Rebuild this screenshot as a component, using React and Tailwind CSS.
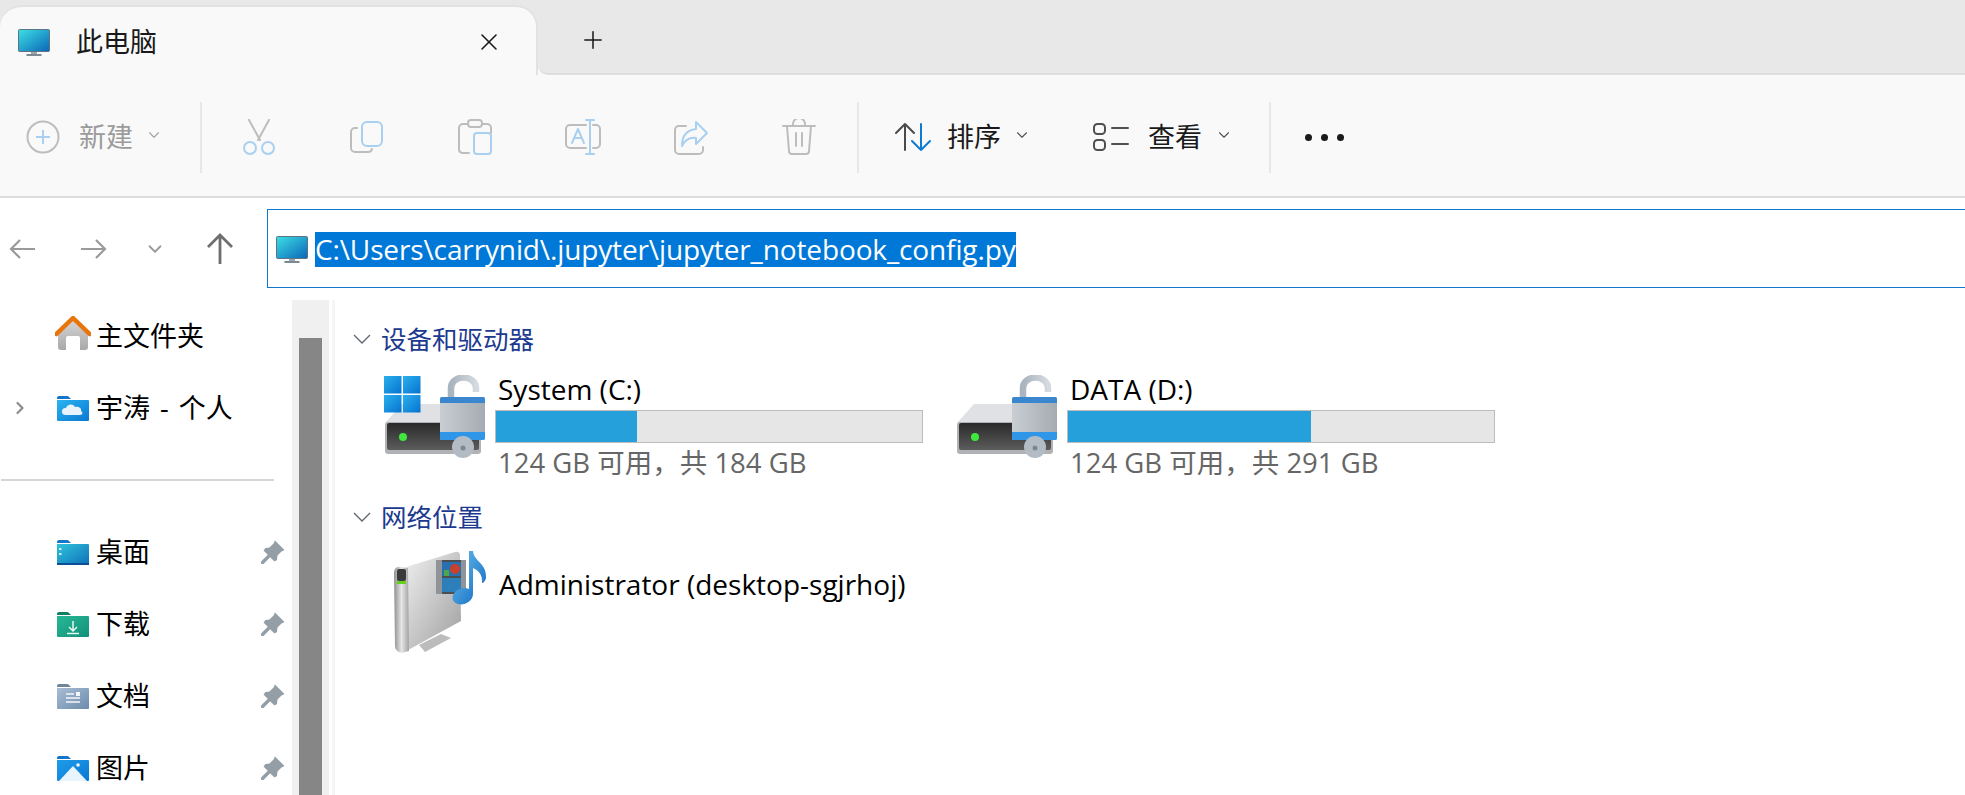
import { ChevronDown, ChevronRight, Plus, X } from "lucide-react";

const UI_FONT = "font-['Open_Sans','Noto_Sans_CJK_SC',sans-serif]";

function Monitor({ className }) {
  return (
    <svg viewBox="0 0 32 27" className={className}>
      <defs>
        <linearGradient id="screen" x1="0" y1="0" x2="1" y2="1">
          <stop offset="0" stopColor="#3ce0e4" />
          <stop offset="1" stopColor="#0b65b8" />
        </linearGradient>
      </defs>
      <rect x="0.5" y="0.5" width="31" height="22" rx="1" fill="url(#screen)" stroke="#5f7482" />
      <rect x="13" y="23" width="6" height="3" fill="#9aa5ad" />
      <rect x="8.5" y="25" width="15" height="2" fill="#7d8990" />
    </svg>
  );
}

function Folder({ children, from = "#2ab4ef", to = "#0a78d4", tab = "#1373c9" }) {
  const id = `folder-${from.slice(1)}`;
  return (
    <svg viewBox="0 0 32 25" className="w-8 h-[25px] shrink-0">
      <defs>
        <linearGradient id={id} x1="0" y1="0" x2="1" y2="1">
          <stop offset="0" stopColor={from} />
          <stop offset="1" stopColor={to} />
        </linearGradient>
      </defs>
      <path d="M0 2a2 2 0 0 1 2-2h8a3 3 0 0 1 2 1l2 2h-14z" fill={tab} />
      <path d="M0 4h31a1 1 0 0 1 1 1v19a1 1 0 0 1-1 1h-30a1 1 0 0 1-1-1z" fill={`url(#${id})`} />
      {children}
    </svg>
  );
}

function Home() {
  return (
    <svg viewBox="0 0 36 34" className="w-9 h-[34px] shrink-0 ml-[-2px] mr-[-2px] mt-[-6px]">
      <defs>
        <linearGradient id="home" x1="0" y1="0" x2="0" y2="1">
          <stop offset="0" stopColor="#d6d6d6" />
          <stop offset="1" stopColor="#a8a8a8" />
        </linearGradient>
      </defs>
      <path d="M3 16L18 4l15 12v15a3 3 0 0 1-3 3h-5V22a2 2 0 0 0-2-2h-10a2 2 0 0 0-2 2v12H6a3 3 0 0 1-3-3z" fill="url(#home)" />
      <path d="M1.5 18L18 2l16.5 16" fill="none" stroke="#e8740c" strokeWidth="4.5" strokeLinejoin="round" strokeLinecap="round" />
    </svg>
  );
}

function Pin() {
  return (
    <svg viewBox="0 0 24 24" className="w-6 h-6 shrink-0 ml-auto mr-[7px]">
      <path d="M14 0.5L23.5 10L20.5 11.5L16.5 15.5L16 20L13.5 21.5L2.5 10.5L4.5 8L8.5 7.5L12.5 3.5z" fill="#939ea6" />
      <path d="M8 16L1.5 22.5" stroke="#939ea6" strokeWidth="3.4" strokeLinecap="round" />
    </svg>
  );
}

function NavRow({ icon, label, pinned, expandable }) {
  return (
    <div className="flex items-center h-[72px]">
      <div className="w-[57px] flex justify-start pl-[10px]">
        {expandable && <ChevronRight className="w-5 h-5 text-[#8c8c8c]" strokeWidth={2.6} />}
      </div>
      <div className="w-8 flex justify-center">{icon}</div>
      <span className="ml-[7px] text-[27px] leading-9 text-black [word-spacing:3px]">{label}</span>
      {pinned && <Pin />}
    </div>
  );
}

function DriveIcon({ windows }) {
  return (
    <svg viewBox="0 0 104 84" className="w-[104px] h-[84px] shrink-0">
      <defs>
        <linearGradient id="win" x1="0" y1="0" x2="1" y2="1">
          <stop offset="0" stopColor="#2bb0ee" />
          <stop offset="1" stopColor="#0673d0" />
        </linearGradient>
        <linearGradient id="drivefront" x1="0" y1="0" x2="0" y2="1">
          <stop offset="0" stopColor="#2a2a2a" />
          <stop offset="1" stopColor="#5c5c5c" />
        </linearGradient>
        <linearGradient id="lockbody" x1="0" y1="0" x2="1" y2="0">
          <stop offset="0" stopColor="#c9ced3" />
          <stop offset="1" stopColor="#a4abb2" />
        </linearGradient>
        <linearGradient id="shackle" x1="0" y1="0" x2="1" y2="0">
          <stop offset="0" stopColor="#a9b4bf" />
          <stop offset="1" stopColor="#d5dae0" />
        </linearGradient>
      </defs>
      <path d="M2 48L19 29H98V48z" fill="#dfe1e5" />
      <rect x="2" y="47" width="96" height="32" rx="3" fill="#b0b2b5" />
      <rect x="4" y="48" width="92" height="27" rx="2" fill="url(#drivefront)" />
      <circle cx="20" cy="62" r="4" fill="#3fe83f" />
      {windows && (
        <g fill="url(#win)">
          <rect x="1" y="1" width="17.5" height="17.5" />
          <rect x="20" y="1" width="17.5" height="17.5" />
          <rect x="1" y="20" width="17.5" height="17.5" />
          <rect x="20" y="20" width="17.5" height="17.5" />
        </g>
      )}
      <path d="M68 23V13A12.500 10.500 0 0 1 93 13V17" fill="none" stroke="url(#shackle)" strokeWidth="6.500" />
      <rect x="57" y="22" width="45" height="43" rx="2" fill="url(#lockbody)" />
      <path d="M57 28v-4a2 2 0 0 1 2-2h41a2 2 0 0 1 2 2v4z" fill="#3a86cf" />
      <path d="M57 57h45v6a2 2 0 0 1-2 2h-41a2 2 0 0 1-2-2z" fill="#2f96e8" />
      <circle cx="80" cy="72" r="11" fill="#b3bcc5" />
      <circle cx="80" cy="73" r="2.5" fill="#7d8791" />
    </svg>
  );
}

function NetworkIcon() {
  return (
    <svg viewBox="0 0 100 106" className="w-[100px] h-[106px] shrink-0">
      <defs>
        <linearGradient id="tower" x1="0" y1="0" x2="1" y2="1">
          <stop offset="0" stopColor="#efefef" />
          <stop offset="1" stopColor="#9f9f9f" />
        </linearGradient>
        <linearGradient id="towerside" x1="0" y1="0" x2="1" y2="0">
          <stop offset="0" stopColor="#8e8e8e" />
          <stop offset="0.5" stopColor="#e6e6e6" />
          <stop offset="1" stopColor="#a2a2a2" />
        </linearGradient>
        <linearGradient id="note" x1="0" y1="0" x2="1" y2="1">
          <stop offset="0" stopColor="#6cc0ee" />
          <stop offset="1" stopColor="#0f68c0" />
        </linearGradient>
      </defs>
      <path d="M30 97L52 86L62 90L36 104z" fill="#bcbcbc" />
      <path d="M17 19L66 4Q71 3 71 8L72 73L19 102z" fill="url(#tower)" />
      <path d="M5 24Q6 18 12 19L19 20L20 103L12 105Q6 103 6 98z" fill="url(#towerside)" />
      <rect x="8" y="21" width="9" height="12" rx="2" fill="#3a3a3a" />
      <rect x="8" y="33" width="9" height="3" fill="#62d21f" />
      <rect x="47" y="12" width="30" height="34" fill="#4b4f52" />
      <rect x="47" y="12" width="6" height="34" fill="#8e9498" />
      <rect x="72" y="12" width="5" height="34" fill="#8e9498" />
      <rect x="53" y="14" width="19" height="14" fill="#2a6fb0" />
      <rect x="53" y="30" width="19" height="14" fill="#2c7fb8" />
      <circle cx="66" cy="21" r="5" fill="#c9402c" />
      <rect x="55" y="22" width="5" height="6" fill="#4ea64a" />
      <path d="M80 3h4c1 11 14 12 13 27c-1 4-3 5-4 5c1-8-4-13-9-15v26c0 7-9 12-15 10c-7-2-7-9-2-13c4-3 9-4 13-2z" fill="url(#note)" />
    </svg>
  );
}

function DriveTile({ name, windows, free, total, percent }) {
  return (
    <div className="flex w-[572px] gap-2">
      <div className="mt-[2px]">
        <DriveIcon windows={windows} />
      </div>
      <div className="w-[428px]">
        <div className="pl-[3px] text-[28px] leading-[33px] text-black">{name}</div>
        <div className="mt-[4px] h-[33px] bg-[#e6e6e6] border border-[#bcbcbc]">
          <div className="h-full bg-[#26a0da]" style={{ width: `${percent}%` }} />
        </div>
        <div className="mt-[2px] pl-[3px] text-[27.5px] leading-9 text-[#666666]">
          {free} GB 可用，共 {total} GB
        </div>
      </div>
    </div>
  );
}

function SectionHeader({ label }) {
  return (
    <div className="flex items-center h-10 pl-[17px]">
      <svg viewBox="0 0 20 20" fill="none" stroke="#5c6670" strokeWidth="1.3" className="w-5 h-5">
        <path d="M2 6l8 8 8-8" />
      </svg>
      <span className="ml-[9px] text-[25.5px] leading-10 text-[#1c3a8f]">{label}</span>
    </div>
  );
}

function ToolIcon({ children }) {
  return (
    <div className="w-[108px] flex justify-center">
      <svg viewBox="0 0 36 36" fill="none" strokeWidth="2" strokeLinecap="round" strokeLinejoin="round" className="w-9 h-9">
        {children}
      </svg>
    </div>
  );
}

const GRAY = "#bdbdbd";
const BLUE = "#a9d0f0";

function Separator() {
  return <div className="w-[2px] h-[71px] bg-[#e7e7e7]" />;
}

export default function App() {
  return (
    <div className={`w-[1965px] h-[795px] overflow-hidden bg-white ${UI_FONT}`}>
      {/* Tab strip */}
      <div className="flex h-[75px] bg-[#f9f9f9]">
        <div className="w-[538px] bg-[#e8e8e8] pt-[5px]">
          <div className="flex items-center h-[70px] bg-[#f9f9f9] rounded-t-[22px] border-t-2 border-r-2 border-[#e2e2e2] pl-[18px] pt-[2px]">
            <Monitor className="w-8 h-[27px]" />
            <span className="ml-[26px] text-[27px] text-[#1a1a1a]">此电脑</span>
            <X className="ml-auto mr-[33px] w-7 h-7 text-[#1a1a1a]" strokeWidth={1.3} />
          </div>
        </div>
        <div className="flex-1 flex items-center bg-[#e8e8e8] rounded-bl-[10px] border-b-2 border-[#dedede] pl-[41px] pt-[6px]">
          <Plus className="w-7 h-7 text-[#1a1a1a]" strokeWidth={1.3} />
        </div>
      </div>

      {/* Command bar */}
      <div className="flex items-center h-[123px] bg-[#f9f9f9] border-b-2 border-[#dcdcdc] pt-[3px]">
        <div className="flex items-center w-[200px] pl-[26px]">
          <svg viewBox="0 0 34 34" fill="none" className="w-[34px] h-[34px]">
            <circle cx="17" cy="17" r="15.5" stroke={GRAY} strokeWidth="2" />
            <path d="M17 10v14M10 17h14" stroke={BLUE} strokeWidth="2" />
          </svg>
          <span className="ml-[19px] text-[27px] text-[#9b9b9b]">新建</span>
          <ChevronDown className="ml-[12px] w-[18px] h-[18px] text-[#a3a3a3] mt-[-4px]" strokeWidth={1.5} />
        </div>
        <Separator />
        <div className="w-[3px]" />
        <ToolIcon>
          <path d="M8 1l11 20M28 1L17 21" stroke={GRAY} />
          <circle cx="9" cy="29" r="6" stroke={BLUE} />
          <circle cx="27" cy="29" r="6" stroke={BLUE} />
        </ToolIcon>
        <ToolIcon>
          <path d="M8 9H6a4 4 0 0 0-4 4v16a4 4 0 0 0 4 4h13a4 4 0 0 0 4-3" stroke={GRAY} />
          <rect x="13" y="3" width="20" height="24" rx="5" stroke={BLUE} />
        </ToolIcon>
        <ToolIcon>
          <path d="M11 5H6a4 4 0 0 0-4 4v22a4 4 0 0 0 4 3h6M25 5h5a4 4 0 0 1 4 4v5" stroke={GRAY} />
          <rect x="11" y="1" width="14" height="7" rx="3" stroke={GRAY} />
          <rect x="17" y="14" width="17" height="21" rx="3" stroke={BLUE} />
        </ToolIcon>
        <ToolIcon>
          <path d="M21 6H5a4 4 0 0 0-4 4v15a4 4 0 0 0 4 4h16M28 6h3a4 4 0 0 1 4 4v15a4 4 0 0 1-4 4h-3" stroke={GRAY} />
          <path d="M21 1h8M25 1v34M21 35h8M7 24l6-14 6 14M9 19h8" stroke={BLUE} />
        </ToolIcon>
        <ToolIcon>
          <path d="M13 7H6a4 4 0 0 0-4 4v20a4 4 0 0 0 4 4h20a4 4 0 0 0 4-4v-3" stroke={GRAY} />
          <path d="M23 3l11 11-11 11v-6c-7-1-11 2-14 8 0-10 5-16 14-17z" stroke={BLUE} />
        </ToolIcon>
        <ToolIcon>
          <path d="M2 7h32M12 7V5a5 5 0 0 1 12 0v2M6 7l2 25a3 3 0 0 0 3 3h14a3 3 0 0 0 3-3l2-25M15 14v13M21 14v13" stroke={GRAY} />
        </ToolIcon>
        <div className="ml-1">
          <Separator />
        </div>
        <div className="flex items-center ml-[36px]">
          <svg viewBox="0 0 36 30" fill="none" strokeWidth="2" strokeLinecap="round" strokeLinejoin="round" className="w-9 h-[30px]">
            <path d="M10 28V2M1 11l9-9 9 9" stroke="#4a4a4a" />
            <path d="M26 2v26M17 19l9 9 9-9" stroke="#0f7bd0" />
          </svg>
          <span className="ml-4 text-[27px] text-[#1a1a1a]">排序</span>
          <ChevronDown className="ml-[12px] w-[18px] h-[18px] text-[#555555] mt-[-4px]" strokeWidth={1.5} />
        </div>
        <div className="flex items-center ml-[62px]">
          <svg viewBox="0 0 36 28" fill="none" strokeWidth="2" strokeLinecap="round" className="w-9 h-7" stroke="#4f4f4f">
            <rect x="1" y="1" width="11" height="10" rx="3.5" />
            <rect x="1" y="17" width="11" height="10" rx="3.5" />
            <path d="M19 5h16M19 21h16" />
          </svg>
          <span className="ml-[19px] text-[27px] text-[#1a1a1a]">查看</span>
          <ChevronDown className="ml-[13px] w-[18px] h-[18px] text-[#555555] mt-[-4px]" strokeWidth={1.5} />
        </div>
        <div className="ml-[36px]">
          <Separator />
        </div>
        <div className="flex gap-[9px] ml-[34px]">
          <div className="w-[7px] h-[7px] rounded-full bg-[#1a1a1a]" />
          <div className="w-[7px] h-[7px] rounded-full bg-[#1a1a1a]" />
          <div className="w-[7px] h-[7px] rounded-full bg-[#1a1a1a]" />
        </div>
      </div>

      {/* Address row */}
      <div className="flex h-[100px] pt-[11px]">
        <div className="flex items-center w-[267px] h-[79px] pl-[9px]">
          <svg viewBox="0 0 28 24" fill="none" stroke="#9a9a9a" strokeWidth="2.2" className="w-7 h-6">
            <path d="M26 12H2M11 3l-9 9 9 9" />
          </svg>
          <svg viewBox="0 0 28 24" fill="none" stroke="#9a9a9a" strokeWidth="2.2" className="w-7 h-6 ml-[42px]">
            <path d="M2 12h24M17 3l9 9-9 9" />
          </svg>
          <ChevronDown className="w-[22px] h-[22px] text-[#9a9a9a] ml-[37px]" strokeWidth={2} />
          <svg viewBox="0 0 30 32" fill="none" stroke="#6e6e6e" strokeWidth="2.8" className="w-[30px] h-8 ml-[39px]">
            <path d="M15 31V2M3 14L15 2l12 12" />
          </svg>
        </div>
        <div className="flex-1 flex items-center h-[79px] border-y border-l border-[#0f78d0] pl-2">
          <Monitor className="w-8 h-[27px] mt-[2px]" />
          <span className="ml-[7px] mt-[1px] h-[35px] leading-[35px] text-[28px] tracking-[-0.13px] whitespace-nowrap bg-[#0078d7] text-white">
            {"C:\\Users\\carrynid\\.jupyter\\jupyter_notebook_config.py"}
          </span>
        </div>
      </div>

      {/* Body */}
      <div className="flex h-[497px]">
        <div className="w-[292px] pt-[2px]">
          <NavRow icon={<Home />} label="主文件夹" />
          <NavRow
            expandable
            label="宇涛 - 个人"
            icon={
              <Folder>
                <path d="M8 19a3.500 3.500 0 0 1 1-7c1-4 7-5 9-1 3-1 7 1 6 4 2 1 2 4-1 4z" fill="#e8f3fb" />
              </Folder>
            }
          />
          <div className="mt-[35px] mb-[35px] ml-[1px] w-[273px] h-[2px] bg-[#d6d6d6]" />
          <NavRow
            pinned
            label="桌面"
            icon={
              <Folder from="#2fc4dc" to="#0f6fb8" tab="#1678c4">
                <rect x="2" y="8" width="2.500" height="2" fill="#cdeef7" />
                <rect x="2" y="13" width="2.500" height="2" fill="#cdeef7" />
                <rect x="0" y="23" width="32" height="2" fill="#0d4f96" />
              </Folder>
            }
          />
          <NavRow
            pinned
            label="下载"
            icon={
              <Folder from="#28b896" to="#12907a" tab="#0e7d62">
                <path d="M16 9v9M12 15l4 4 4-4M10 21.500h12" stroke="#e8f8f2" strokeWidth="1.500" fill="none" />
              </Folder>
            }
          />
          <NavRow
            pinned
            label="文档"
            icon={
              <Folder from="#a9bdd3" to="#6c8bad" tab="#6f8698">
                <path d="M9 10h8M9 14h14M9 18h14" stroke="#f2f6fa" strokeWidth="1.500" />
                <rect x="19" y="8" width="4" height="4" fill="#f2f6fa" />
              </Folder>
            }
          />
          <NavRow
            pinned
            label="图片"
            icon={
              <Folder from="#1f9cea" to="#0a78d4" tab="#1373c9">
                <path d="M2 25L16 10l14 15z" fill="#e9f5fc" />
                <circle cx="21" cy="9" r="1.800" fill="#ffffff" />
              </Folder>
            }
          />
        </div>

        {/* Scrollbar */}
        <div className="w-[37px] mt-[2px] bg-[#f0f0f0] pt-[38px] px-[7px]">
          <div className="h-full bg-[#868686]" />
        </div>
        <div className="w-[3px] ml-[3px] mt-[2px] bg-[#f5f5f5]" />

        {/* Content */}
        <div className="flex-1 pt-[21px]">
          <SectionHeader label="设备和驱动器" />
          <div className="flex mt-[14px] pl-[48px]">
            <DriveTile name="System (C:)" windows free={124} total={184} percent={33} />
            <DriveTile name="DATA (D:)" free={124} total={291} percent={57} />
          </div>
          <div className="mt-[16px]">
            <SectionHeader label="网络位置" />
          </div>
          <div className="flex items-start mt-[11px] pl-[54px]">
            <NetworkIcon />
            <span className="ml-[10px] mt-[19px] text-[28px] leading-[34px] text-black">Administrator (desktop-sgjrhoj)</span>
          </div>
        </div>
      </div>
    </div>
  );
}
